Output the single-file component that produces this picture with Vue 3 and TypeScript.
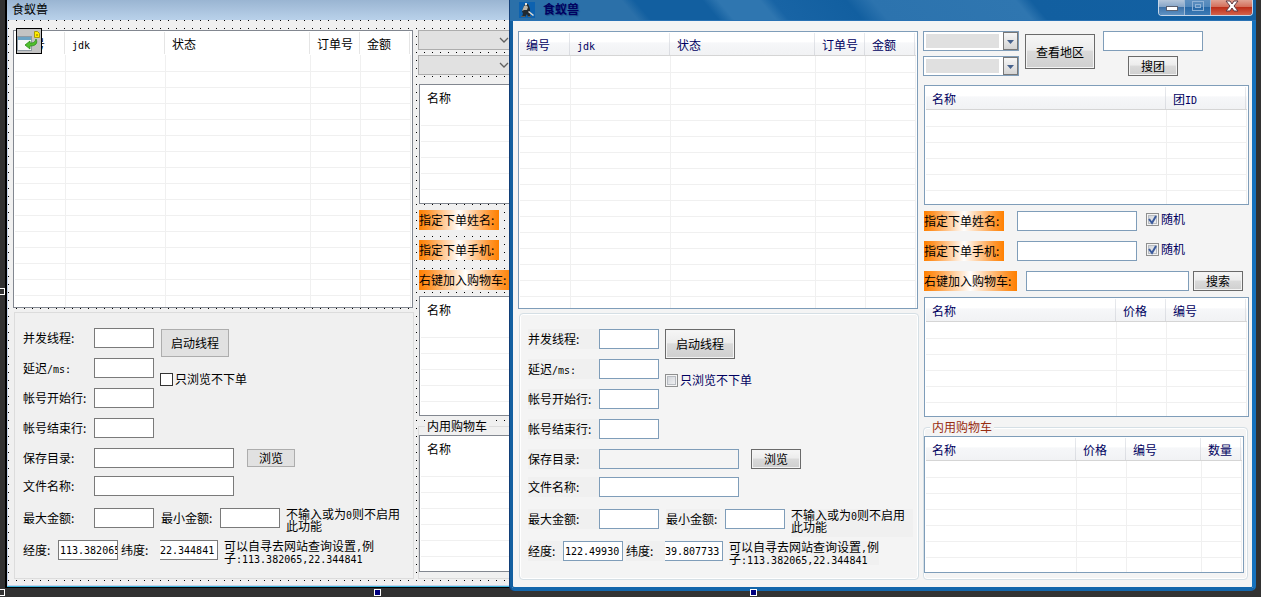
<script setup lang="ts">
interface Column {
  title: string
  width: number
}

interface Win {
  id: string
  theme: 'design' | 'runtime'
  longitude: string
  latitude: string
  random: boolean
}

const windows: Win[] = [
  { id: 'design', theme: 'design', longitude: '113.382065', latitude: '22.344841', random: false },
  { id: 'runtime', theme: 'runtime', longitude: '122.49930', latitude: '39.807733', random: true },
]

const accountColumns: Column[] = [
  { title: '编号', width: 51 },
  { title: 'jdk', width: 100 },
  { title: '状态', width: 145 },
  { title: '订单号', width: 50 },
  { title: '金额', width: 50 },
]
const groupColumns: Column[] = [
  { title: '名称', width: 241 },
  { title: '团ID', width: 80 },
]
const goodsColumns: Column[] = [
  { title: '名称', width: 191 },
  { title: '价格', width: 50 },
  { title: '编号', width: 80 },
]
const cartColumns: Column[] = [
  { title: '名称', width: 151 },
  { title: '价格', width: 50 },
  { title: '编号', width: 75 },
  { title: '数量', width: 40 },
]

const shortFields = [
  { key: 'threads', label: '并发线程:' },
  { key: 'delay', label: '延迟', latin: '/ms:' },
  { key: 'start', label: '帐号开始行:' },
  { key: 'end', label: '帐号结束行:' },
]
const contacts = [
  { key: 'name', label: '指定下单姓名:' },
  { key: 'phone', label: '指定下单手机:' },
]

const pct = (c: Column, all: Column[]) =>
  `${(c.width / all.reduce((sum, x) => sum + x.width, 0)) * 100}%`
const isLatin = (t: string) => /^[a-z]+$/i.test(t)
</script>

<template>
  <main class="desktop">
    <section v-for="w in windows" :key="w.id" class="window" :class="w.theme">
      <header class="titlebar">
        <svg v-if="w.theme === 'runtime'" class="app-icon" viewBox="0 0 16 16" aria-hidden="true">
          <rect width="16" height="16" fill="#0d62b0" />
          <path d="M6 2h3l1 2 1 3v3l1 1-1 1v3H9l-1-3-2 3H3l1-4-1-1 1-4z" fill="#222a30" />
          <path d="M5 4l2-1 2 2-1 3H5L3 9z" fill="#b9b3a6" />
          <path d="M6 1h2v2H6z" fill="#e8e6df" />
          <path d="M10 9l5 4-1 1-5-4z" fill="#dcdcd8" />
          <path d="M2 14.500h4M9 14.500h3" stroke="#5b5a52" />
        </svg>
        <h1 class="title">食蚁兽</h1>
        <div v-if="w.theme === 'runtime'" class="controls">
          <button type="button" class="ctl" aria-label="最小化">
            <svg viewBox="0 0 14 12"><rect x="1.500" y="6.500" width="11" height="4" fill="#fff" stroke="#5a6070" /></svg>
          </button>
          <button type="button" class="ctl" aria-label="最大化">
            <svg viewBox="0 0 14 12">
              <rect x="1.500" y="1.500" width="11" height="9" fill="none" stroke="#8fb2d6" />
              <rect x="4.500" y="4.500" width="5" height="3" fill="none" stroke="#8fb2d6" />
            </svg>
          </button>
          <button type="button" class="ctl close" aria-label="关闭">
            <svg viewBox="0 0 14 12">
              <path d="M1 1h4l2 3 2-3h4L9 6l4 5H9L7 8l-2 3H1l4-5z" fill="#fff" stroke="#5e3a44" />
            </svg>
          </button>
        </div>
      </header>

      <div class="client">
        <div class="left">
          <div class="list accounts">
            <table>
              <colgroup>
                <col v-for="c in accountColumns" :key="c.title" :style="{ width: pct(c, accountColumns) }" />
              </colgroup>
              <thead>
                <tr>
                  <th v-for="c in accountColumns" :key="c.title">
                    <span :class="{ num: isLatin(c.title) }">{{ c.title }}</span>
                  </th>
                </tr>
              </thead>
              <tbody>
                <tr v-for="r in 16" :key="r"><td v-for="c in accountColumns" :key="c.title"></td></tr>
              </tbody>
            </table>
          </div>

          <div class="group settings">
            <div class="top">
              <div class="fields">
                <div v-for="f in shortFields" :key="f.key" class="row">
                  <label class="lbl" :for="`${w.id}-${f.key}`">{{ f.label }}<span v-if="f.latin" class="num">{{ f.latin }}</span></label>
                  <input :id="`${w.id}-${f.key}`" class="box w60" type="text" />
                </div>
              </div>
              <div class="side">
                <button type="button" class="btn start">启动线程</button>
                <label class="check">
                  <span class="tick"><input type="checkbox" /></span>只浏览不下单
                </label>
              </div>
            </div>
            <div class="row">
              <label class="lbl" :for="`${w.id}-dir`">保存目录:</label>
              <input :id="`${w.id}-dir`" class="box w140 readonly" type="text" readonly />
              <button type="button" class="btn browse">浏览</button>
            </div>
            <div class="row file">
              <label class="lbl" :for="`${w.id}-file`">文件名称:</label>
              <input :id="`${w.id}-file`" class="box w140" type="text" />
            </div>
            <div class="row amounts">
              <label class="lbl" :for="`${w.id}-max`">最大金额:</label>
              <input :id="`${w.id}-max`" class="box w60" type="text" />
              <label class="lbl min" :for="`${w.id}-min`">最小金额:</label>
              <input :id="`${w.id}-min`" class="box w60" type="text" />
              <p class="note amount-note">不输入或为<span class="num">0</span>则不启用<br />此功能</p>
            </div>
            <div class="row coords">
              <label class="lbl lon" :for="`${w.id}-lon`">经度:</label>
              <input :id="`${w.id}-lon`" class="box w60 num" type="text" :value="w.longitude" />
              <label class="lbl lat" :for="`${w.id}-lat`">纬度:</label>
              <input :id="`${w.id}-lat`" class="box open num" type="text" :value="w.latitude" />
              <p class="note">可以自寻去网站查询设置<span class="num">,</span>例<br />子<span class="num">:113.382065,22.344841</span></p>
            </div>
          </div>
        </div>

        <div class="right">
          <div class="search">
            <div class="combos">
              <div v-for="n in 2" :key="n" class="combo">
                <select :aria-label="n === 1 ? '省份' : '城市'"></select>
                <span class="drop">
                  <svg v-if="w.theme === 'runtime'" viewBox="0 0 13 16"><path d="M3 7h7L6.500 11z" fill="#46618c" /></svg>
                  <svg v-else viewBox="0 0 13 16"><path d="M2 7l4 4 4-4" fill="none" stroke="#606060" stroke-width="1.300" /></svg>
                </span>
              </div>
            </div>
            <button type="button" class="btn region">查看地区</button>
            <div class="find">
              <input class="box w100" type="text" aria-label="搜团" />
              <button type="button" class="btn small">搜团</button>
            </div>
          </div>

          <div class="list groups">
            <table>
              <colgroup>
                <col v-for="c in groupColumns" :key="c.title" :style="{ width: pct(c, groupColumns) }" />
              </colgroup>
              <thead>
                <tr>
                  <th>名称</th>
                  <th>团<span class="num">ID</span></th>
                </tr>
              </thead>
              <tbody>
                <tr v-for="r in 6" :key="r"><td v-for="c in groupColumns" :key="c.title"></td></tr>
              </tbody>
            </table>
          </div>

          <div class="order">
            <div v-for="c in contacts" :key="c.key" class="row">
              <label class="hot" :for="`${w.id}-${c.key}`">{{ c.label }}</label>
              <input :id="`${w.id}-${c.key}`" class="box w120" type="text" />
              <label class="check">
                <span class="tick">
                  <input type="checkbox" :checked="w.random" />
                  <svg v-if="w.random" viewBox="0 0 13 13"><path d="M3 6l3 4 4-7" fill="none" stroke="#3a5a9c" stroke-width="2" /></svg>
                </span>随机
              </label>
            </div>
            <div class="row">
              <label class="hot wide" :for="`${w.id}-goods`">右键加入购物车:</label>
              <input :id="`${w.id}-goods`" class="box goods-box" type="text" />
              <button type="button" class="btn small">搜索</button>
            </div>
          </div>

          <div class="list goods">
            <table>
              <colgroup>
                <col v-for="c in goodsColumns" :key="c.title" :style="{ width: pct(c, goodsColumns) }" />
              </colgroup>
              <thead>
                <tr><th v-for="c in goodsColumns" :key="c.title">{{ c.title }}</th></tr>
              </thead>
              <tbody>
                <tr v-for="r in 6" :key="r"><td v-for="c in goodsColumns" :key="c.title"></td></tr>
              </tbody>
            </table>
          </div>

          <fieldset class="group cart">
            <legend>内用购物车</legend>
            <div class="list cart-list">
              <table>
                <colgroup>
                  <col v-for="c in cartColumns" :key="c.title" :style="{ width: pct(c, cartColumns) }" />
                </colgroup>
                <thead>
                  <tr><th v-for="c in cartColumns" :key="c.title">{{ c.title }}</th></tr>
                </thead>
                <tbody>
                  <tr v-for="r in 7" :key="r"><td v-for="c in cartColumns" :key="c.title"></td></tr>
                </tbody>
              </table>
            </div>
          </fieldset>
        </div>
      </div>

      <svg v-if="w.theme === 'design'" class="component" viewBox="0 0 26 26" aria-hidden="true">
        <rect x="0.500" y="0.500" width="25" height="25" fill="#c3c3c3" stroke="#000" />
        <rect x="1.500" y="8.500" width="14" height="14" fill="#f8f8f8" stroke="#8f9aa3" />
        <rect x="2" y="9" width="13" height="3" fill="#6ba3c4" />
        <path d="M18.500 3.500h3l2 2v4h-5z" fill="#ffee00" stroke="#a89a10" />
        <path d="M20 6h2v2h-2z" fill="#c9a800" />
        <path d="M9 17l5-4v2c4 0 5-1 6-4 2 4 0 7-6 7v3z" fill="#4fc02c" stroke="#2c8a18" stroke-width="0.800" />
      </svg>
    </section>

    <i class="handle side-mid"></i>
    <i class="handle corner"></i>
    <i class="handle filled bottom-mid"></i>
    <i class="handle filled bottom-right"></i>
  </main>
</template>

<style>
html,
body,
#app {
  height: 100%;
  margin: 0;
}
</style>

<style scoped>
* {
  box-sizing: border-box;
}
.desktop {
  position: relative;
  height: 100%;
  overflow: hidden;
  background: #323232;
  font: 12px/12px 'Noto Sans CJK SC', 'Liberation Sans', sans-serif;
  color: #000;
}
button,
input,
select {
  font: inherit;
  color: inherit;
  margin: 0;
  padding: 0;
  border-radius: 0;
  outline: none;
}
.num,
input.num {
  font-family: 'DejaVu Sans Mono', 'Liberation Mono', monospace;
  font-size: 10px;
  line-height: 8px;
}

/* windows */
.window {
  position: absolute;
  top: 0;
}
.window.design {
  left: 5px;
  right: 514px;
  border: solid #000;
  border-width: 0 0 1px 2px;
}
.window.runtime {
  left: 510px;
  right: 5px;
  border: solid #125fa0;
  border-width: 0 4px 4px 3px;
  border-radius: 0 0 5px 5px;
  box-shadow: -1px 0 0 #123f78;
  border-right-color: #1672bd;
  border-bottom-color: #1366ab;
  background: #f4f4f4;
}
.titlebar {
  display: flex;
  align-items: flex-start;
}
.design .titlebar {
  height: 20px;
  padding: 2px 0 0 5px;
  background: linear-gradient(#9ab5d2, #b9d1ea);
}
.runtime .titlebar {
  height: 21px;
  margin: 0 -4px 0 -3px;
  padding: 2px 3px 0 9px;
  border-bottom: 1px solid #2a72b4;
  background: linear-gradient(
    50deg,
    #2b70a9 0,
    #2b70a9 98px,
    #125fa0 108px,
    #125fa0 160px,
    #2f76b0 172px,
    #2f76b0 204px,
    #1864a5 214px,
    #125fa0 270px,
    #2c73ae 290px,
    #2f76b0 400px,
    #125fa0 412px,
    #1361a3 100%
  );
}
.title {
  margin: 0;
  font-size: 12px;
  line-height: 14px;
  font-weight: 400;
}
.runtime .title {
  color: #000060;
  font-weight: 700;
  text-shadow: 1px 1px 1px #1a4c86;
}
.app-icon {
  width: 16px;
  height: 16px;
  margin-right: 8px;
}
.controls {
  display: flex;
  height: 16px;
  margin: -2px 0 0 auto;
  border: solid #c6d6e8;
  border-width: 0 1px 1px;
  border-radius: 0 0 4px 4px;
  overflow: hidden;
}
.ctl {
  display: flex;
  justify-content: center;
  width: 26px;
  height: 15px;
  border: 0;
  border-right: 1px solid #9db8d4;
  background: linear-gradient(#b4c6da, #87a6c8 45%, #3e72a8 50%, #5f93c4);
}
.ctl:nth-child(2) {
  background: linear-gradient(#5f90c0, #4f86ba 45%, #2768a6 50%, #3e7cb6);
}
.ctl.close {
  width: 41px;
  border-right: 0;
  background: linear-gradient(#e0a293, #d4705c 45%, #bd2f1a 50%, #d3624a);
}
.ctl svg {
  width: 14px;
  height: 12px;
}

/* client area */
.client {
  display: grid;
  grid-template-columns: minmax(0, 400fr) minmax(0, 326fr);
  column-gap: 5px;
  padding: 10px 3px 7px 5px;
}
.design .client {
  margin-bottom: 1px;
  padding-bottom: 6px;
  border: solid #c3d3ea;
  border-width: 0 0 1px 1px;
  box-shadow: 0 1px 0 #3fb6dc;
  background: conic-gradient(from 0deg at 1px 1px, transparent 0 270deg, #000 270deg 360deg) 0 0 / 8px 8px #f0f0f0;
}
.right {
  min-width: 0;
}

/* lists */
.list {
  overflow: hidden;
  padding: 1px;
  border: 1px solid #7f9db9;
  background: #fff;
}
.design .list {
  border-color: #828790;
}
.accounts {
  height: 278px;
}
.groups,
.goods {
  height: 120px;
  margin-left: 1px;
}
.cart-list {
  height: 137px;
}
table {
  width: 100%;
  table-layout: fixed;
  border-collapse: separate;
  border-spacing: 0;
}
th {
  height: 23px;
  padding: 2px 0 0 6px;
  text-align: left;
  font-weight: 400;
  white-space: nowrap;
  border-bottom: 1px solid #d5d5d5;
  color: #000060;
  background:
    linear-gradient(#e8eaee, #d9dbe0) right 1px top 0 / 1px 100% no-repeat,
    linear-gradient(#fff 0, #fff 40%, #f6f7f9 45%, #f1f2f4 100%);
}
.design th {
  color: #000;
  border-bottom-color: #fff;
  background: linear-gradient(#e5e5e5, #e5e5e5) right 1px top 0 / 1px 100% no-repeat #fff;
}
td {
  height: 16px;
  padding: 0;
  border: solid #f0f0f0;
  border-width: 0 1px 1px 0;
}
tbody tr:first-child td {
  height: 17px;
}

/* controls */
.row {
  display: flex;
  height: 20px;
}
.box {
  height: 20px;
  padding: 0 0 0 1px;
  border: 1px solid #7f9db9;
  background: #fff;
}
.design .box {
  border-color: #7a7a7a;
}
.runtime .readonly {
  background: #f4f4f4;
}
.w60 {
  width: 60px;
}
.w100 {
  width: 100px;
}
.w120 {
  width: 120px;
}
.w140 {
  width: 140px;
}
.btn {
  flex: none;
  border: 1px solid #6a6a6a;
  background: linear-gradient(#f6f6f6 0, #ececec 45%, #dadada 50%, #cfcfcf 100%);
  box-shadow: inset 0 0 0 1px #f4f4f4;
  text-align: center;
  white-space: nowrap;
}
.design .btn {
  border-color: transparent;
  background: #e1e1e1;
  background-clip: padding-box;
  box-shadow: inset 0 0 0 1px #adadad;
}
.check {
  display: flex;
  align-items: center;
  gap: 2px;
  height: 14px;
  white-space: nowrap;
}
.runtime .check {
  color: #000060;
}
.tick {
  position: relative;
  display: flex;
  width: 13px;
  height: 13px;
}
.tick input {
  appearance: none;
  width: 13px;
  height: 13px;
  border: 1px solid #333;
  background: #fff;
}
.runtime .tick input {
  border-color: #8e8f8f;
  background: linear-gradient(135deg, #cbcfd5, #f6f6f6);
  box-shadow: inset 0 0 0 1px #f4f4f4, inset 0 0 0 2px #b8bcc2;
}
.tick svg {
  position: absolute;
  inset: 0;
  pointer-events: none;
}

/* settings */
.group {
  border: 1px solid #d5dfe5;
  border-radius: 4px;
  background: #f4f4f4;
  box-shadow: inset 0 0 0 1px #fff;
}
.design .group {
  border-color: #dcdcdc;
  border-radius: 0;
  background: #f0f0f0;
  box-shadow: none;
}
.settings {
  height: 267px;
  margin: 4px -1px 0 1px;
  padding: 15px 0 0 8px;
}
.top {
  display: flex;
}
.fields .row {
  margin-bottom: 10px;
}
.side {
  display: flex;
  flex-direction: column;
  align-items: flex-start;
  gap: 14px;
  margin-left: 6px;
}
.lbl {
  flex: none;
  width: 71px;
  line-height: 20px;
  white-space: nowrap;
}
.runtime .lbl,
.runtime .note {
  background: #f0f0f0;
}
.start {
  width: 70px;
  height: 30px;
}
.browse {
  width: 50px;
  height: 20px;
  margin-left: 12px;
}
.file {
  margin-top: 8px;
}
.amounts,
.coords {
  margin-top: 12px;
}
.lbl.min {
  width: 54px;
  margin: 0 5px 0 7px;
}
.lbl.lon {
  width: 35px;
}
.lbl.lat {
  width: 39px;
  margin-left: 3px;
}
.open {
  width: 58px;
  padding: 0;
  border-left: 0;
}
.note {
  height: 28px;
  margin: 0 0 0 6px;
  line-height: 12px;
  white-space: nowrap;
}
.amount-note {
  width: 122px;
}
.coords .note {
  height: 24px;
}

/* search */
.search {
  display: flex;
  align-items: flex-start;
  height: 54px;
}
.combos {
  display: flex;
  flex-direction: column;
  gap: 5px;
}
.combo {
  position: relative;
  width: 96px;
  height: 20px;
}
.combo select {
  display: block;
  appearance: none;
  width: 96px;
  height: 20px;
  padding: 2px 19px 2px 2px;
  border: 1px solid #7f9db9;
  background: linear-gradient(#e0e0e0, #e0e0e0) content-box no-repeat, #fff;
}
.design .combo select {
  border-color: #adadad;
  background: #e1e1e1;
}
.drop {
  position: absolute;
  top: 1px;
  right: 1px;
  width: 15px;
  height: 18px;
  border: 1px solid #777;
  background: linear-gradient(#f6f6f6, #d4d4d4);
  pointer-events: none;
}
.drop svg {
  display: block;
  width: 13px;
  height: 16px;
}
.design .drop {
  border: 0;
  background: none;
}
.region {
  width: 70px;
  height: 35px;
  margin: 3px 0 0 6px;
}
.find {
  display: flex;
  flex-direction: column;
  align-items: center;
  gap: 5px;
  margin-left: 8px;
}
.small {
  width: 50px;
  height: 20px;
}
.order {
  display: flex;
  flex-direction: column;
  gap: 10px;
  margin: 6px 6px 6px 1px;
}
.hot {
  flex: none;
  width: 80px;
  margin-right: 13px;
  line-height: 20px;
  white-space: nowrap;
  background: linear-gradient(90deg, #ff8000, #ff9630 12%, #fff 50%, #ff9630 88%, #ff8000);
}
.hot.wide {
  width: 93px;
  margin-right: 9px;
}
.order .check {
  margin: 1px 0 0 9px;
}
.goods-box {
  flex: 1;
  min-width: 0;
  margin-right: 4px;
}

/* cart */
.cart {
  margin: 4px 1px 0 0;
  min-width: 0;
  padding: 3px 3px 6px 0;
}
.cart legend {
  margin-left: 6px;
  padding: 0 2px;
  background: #f4f4f4;
}
.design .cart legend {
  background: #f0f0f0;
}
.runtime .cart legend {
  color: #982c10;
}

/* canvas overlays */
.component {
  position: absolute;
  left: 9px;
  top: 28px;
  width: 26px;
  height: 26px;
}
.handle {
  position: absolute;
  width: 7px;
  height: 7px;
  border: 1px solid #fff;
  background: #323232;
}
.filled {
  background: #000080;
}
.side-mid {
  left: -2px;
  top: 288px;
}
.corner {
  left: -2px;
  top: 589px;
}
.bottom-mid {
  left: 374px;
  top: 589px;
}
.bottom-right {
  left: 750px;
  top: 589px;
}
</style>
